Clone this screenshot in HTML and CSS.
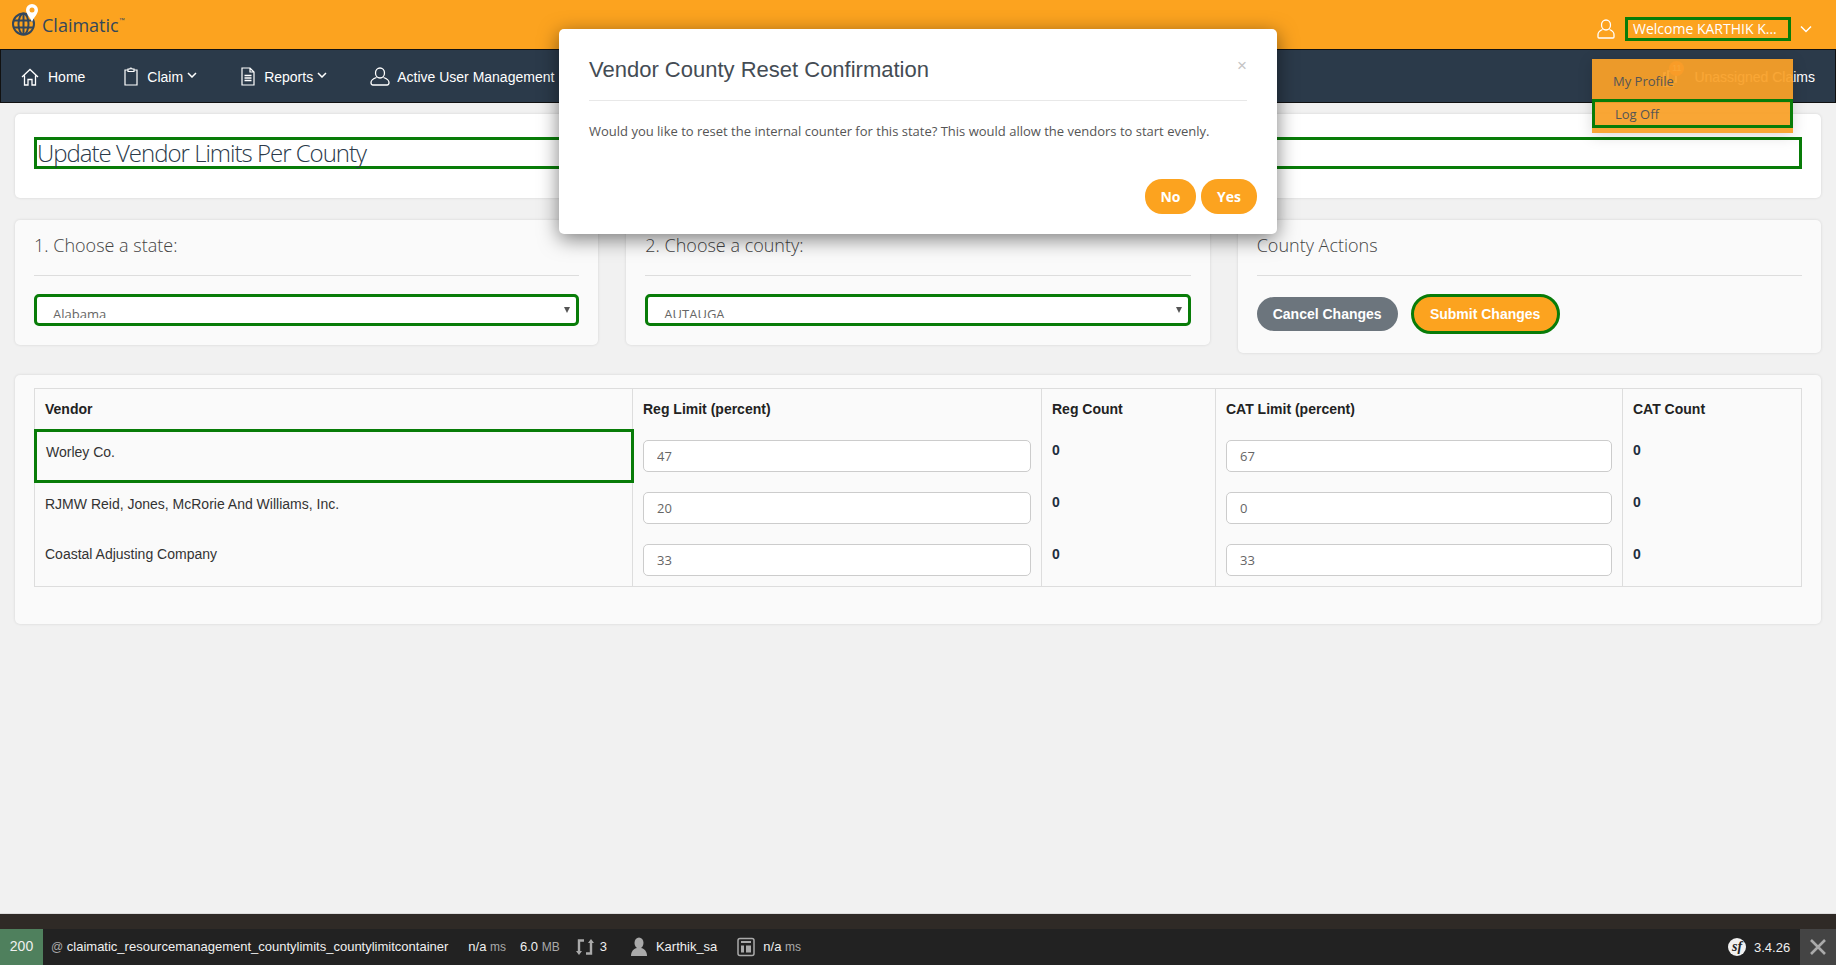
FILE: index.html
```html
<!DOCTYPE html>
<html lang="en">
<head>
  <meta charset="UTF-8" />
  <title>Update Vendor Limits Per County</title>
  <link rel="stylesheet" href="styles.css">
</head>
<body>
  <header class="topbar">
    <div class="logo">
      <svg class="logo-mark" width="32" height="38" viewBox="0 0 32 38">
        <g fill="none" stroke="#33475b" stroke-width="2">
          <circle cx="13.500" cy="24" r="10.500" />
          <ellipse cx="13.500" cy="24" rx="5" ry="10.500" />
          <path d="M13.500 13.500v21M3.500 20.500h20M3.500 27.500h20" />
        </g>
        <path d="M22 4a6 6 0 0 1 6 6c0 4-4 7-6 12c-2-5-6-8-6-12a6 6 0 0 1 6-6z" fill="#fff" />
        <circle cx="22" cy="10" r="2.500" fill="#fca31f" />
      </svg>
      <span class="logo-name">Claimatic</span><span class="logo-tm">™</span>
    </div>
    <div class="account">
      <svg class="account-icon" width="18" height="20" viewBox="0 0 18 20" fill="none" stroke="#fff" stroke-width="1.300">
        <ellipse cx="9" cy="6" rx="4.500" ry="5" />
        <path d="M5.500 10.500C3 11.500 1 13 1 15.500V18a1 1 0 0 0 1 1h14a1 1 0 0 0 1-1v-2.500c0-2.500-2-4-4.500-5" />
      </svg>
      <span class="welcome">Welcome KARTHIK K...</span>
      <svg class="chevron-big" width="12" height="8" viewBox="0 0 12 8" fill="none" stroke="#fff" stroke-width="1.500"><path d="M1 1.500l5 5 5-5" /></svg>
    </div>
  </header>

  <nav class="navbar">
    <a class="nav-item nav-home">
      <svg width="18" height="18" viewBox="0 0 18 18" fill="none" stroke="#fff" stroke-width="1.300">
        <path d="M1 9l8-7.500L17 9M3.500 7.500V17h3.500v-5.500h4V17h3.500V7.500" />
      </svg>
      Home
    </a>
    <a class="nav-item nav-claim">
      <svg width="14" height="19" viewBox="0 0 14 19" fill="none" stroke="#fff" stroke-width="1.200">
        <path d="M4 3H1v15h12V3h-3M4 4.500V2h2a1 1 0 0 1 2 0h2v2.500z" />
      </svg>
      Claim
      <svg class="chevron" width="10" height="6" viewBox="0 0 10 6" fill="none" stroke="#fff" stroke-width="1.500"><path d="M1 1l4 4 4-4" /></svg>
    </a>
    <a class="nav-item nav-reports">
      <svg width="14" height="19" viewBox="0 0 14 19" fill="none" stroke="#fff" stroke-width="1.200">
        <path d="M1 1h8l4 4v13H1zM9 1v4h4" />
        <path d="M3.500 8.500h7M3.500 11h7M3.500 13.500h7" stroke-width="1.600" />
      </svg>
      Reports
      <svg class="chevron" width="10" height="6" viewBox="0 0 10 6" fill="none" stroke="#fff" stroke-width="1.500"><path d="M1 1l4 4 4-4" /></svg>
    </a>
    <a class="nav-item nav-users">
      <svg width="20" height="19" viewBox="0 0 20 19" fill="none" stroke="#fff" stroke-width="1.300">
        <ellipse cx="10" cy="6" rx="4.500" ry="5" />
        <path d="M6.500 10.500C3.500 11.500 1 13 1 15.500c0 1.500.500 2.500 2 2.500h14c1.500 0 2-1 2-2.500c0-2.500-2.500-4-5.500-5" />
      </svg>
      Active User Management
    </a>
    <a class="nav-item nav-unassigned">
      <span class="unassigned-icon">
        <svg width="17" height="20" viewBox="0 0 17 20" fill="none" stroke="#fff" stroke-width="1.700">
          <path d="M5 4h8v11H5zM3 6H1v13h9v-2" />
        </svg>
        <span class="badge">11</span>
      </span>
      Unassigned Claims
    </a>
  </nav>

  <main class="content">
    <section class="card card-title">
      <h1 class="page-title">Update Vendor Limits Per County</h1>
    </section>

    <div class="filters">
      <section class="card filter">
        <h2 class="filter-title">1. Choose a state:</h2>
        <div class="select-box"><span>Alabama</span></div>
      </section>
      <section class="card filter">
        <h2 class="filter-title">2. Choose a county:</h2>
        <div class="select-box"><span>AUTAUGA</span></div>
      </section>
      <section class="card filter">
        <h2 class="filter-title">County Actions</h2>
        <div class="actions">
          <button class="btn btn-grey">Cancel Changes</button>
          <button class="btn btn-orange">Submit Changes</button>
        </div>
      </section>
    </div>

    <section class="card card-table">
      <table class="limits">
        <colgroup>
          <col class="col-vendor"><col class="col-reg"><col class="col-regcount"><col class="col-cat"><col>
        </colgroup>
        <thead>
          <tr><th>Vendor</th><th>Reg Limit (percent)</th><th>Reg Count</th><th>CAT Limit (percent)</th><th>CAT Count</th></tr>
        </thead>
        <tbody>
          <tr>
            <td class="vendor vendor-marked">Worley Co.</td>
            <td><input class="limit" value="47"></td>
            <td class="count">0</td>
            <td><input class="limit" value="67"></td>
            <td class="count">0</td>
          </tr>
          <tr>
            <td class="vendor">RJMW Reid, Jones, McRorie And Williams, Inc.</td>
            <td><input class="limit" value="20"></td>
            <td class="count">0</td>
            <td><input class="limit" value="0"></td>
            <td class="count">0</td>
          </tr>
          <tr>
            <td class="vendor">Coastal Adjusting Company</td>
            <td><input class="limit" value="33"></td>
            <td class="count">0</td>
            <td><input class="limit" value="33"></td>
            <td class="count">0</td>
          </tr>
        </tbody>
      </table>
    </section>
  </main>

  <div class="gap-strip"></div>
  <footer class="toolbar">
    <span class="status">200</span>
    <span class="route"><i>@</i> claimatic_resourcemanagement_countylimits_countylimitcontainer</span>
    <span class="metric metric-time">n/a <i>ms</i></span>
    <span class="metric metric-mem">6.0 <i>MB</i></span>
    <svg class="tool-icon" width="18" height="20" viewBox="0 0 18 20" fill="none" stroke="#aaa" stroke-width="2.400">
      <path d="M8 3.500H3v12M10 16.500h5v-12" />
      <path d="M0 14l3 4 3-4zM12 6l3-4 3 4z" fill="#aaa" stroke="none" />
    </svg>
    <span class="metric metric-count">3</span>
    <svg class="tool-icon tool-user" width="18" height="20" viewBox="0 0 18 20" fill="#aaa">
      <ellipse cx="9" cy="6" rx="4.500" ry="5.500" />
      <path d="M1 19c0-5 3-7.500 6-8h4c3 .500 6 3 6 8z" />
    </svg>
    <span class="metric metric-user">Karthik_sa</span>
    <svg class="tool-icon tool-layout" width="18" height="20" viewBox="0 0 18 20" fill="none" stroke="#aaa" stroke-width="1.500">
      <rect x="1" y="1.500" width="16" height="17" rx="2" />
      <path d="M4 5h10" stroke-width="2" />
      <path d="M4 8.500h3v7H4zM9 8.500h5v7H9z" fill="#aaa" stroke="none" />
    </svg>
    <span class="metric metric-layout">n/a <i>ms</i></span>
    <span class="toolbar-right">
      <span class="sf-logo">sf</span>
      <span class="version">3.4.26</span>
      <span class="toolbar-close">
        <svg width="16" height="16" viewBox="0 0 16 16" stroke="#aaa" stroke-width="2.600"><path d="M1 1l14 14M15 1L1 15" /></svg>
      </span>
    </span>
  </footer>

  <div class="user-menu">
    <a class="user-menu-item">My Profile</a>
    <a class="user-menu-item user-menu-logoff">Log Off</a>
  </div>

  <div class="modal">
    <div class="modal-head">
      <h3 class="modal-title">Vendor County Reset Confirmation</h3>
      <span class="modal-close">×</span>
    </div>
    <p class="modal-body">Would you like to reset the internal counter for this state? This would allow the vendors to start evenly.</p>
    <div class="modal-foot">
      <button class="btn-small">No</button>
      <button class="btn-small">Yes</button>
    </div>
  </div>
</body>
</html>
```

FILE: styles.css
```css
* {
  box-sizing: border-box;
}

body {
  margin: 0;
  height: 965px;
  overflow: hidden;
  display: flex;
  flex-direction: column;
  font-family: "Liberation Sans", Arial, sans-serif;
  background-color: #f1f1f1;
  color: #333;
}

/* top orange bar */
.topbar {
  height: 49px;
  flex: none;
  background-color: #fca31f;
  display: flex;
  justify-content: space-between;
  align-items: center;
  padding: 0 24px 0 10px;
}

.logo {
  display: flex;
  align-items: center;
  height: 49px;
}

.logo-mark {
  margin-top: -11px;
}

.logo-name {
  font-family: "Open Sans", sans-serif;
  font-size: 18px;
  color: #33475b;
  margin-top: 1px;
}

.logo-tm {
  font-size: 6px;
  color: #33475b;
  margin-top: -10px;
}

.account {
  display: flex;
  align-items: center;
  padding-top: 9px;
}

.account-icon {
  margin-right: 10px;
}

.welcome {
  width: 166px;
  height: 24px;
  border: 3px solid #087c08;
  color: #fff;
  font-family: "Open Sans", sans-serif;
  font-size: 14px;
  line-height: 18px;
  padding-left: 5px;
  white-space: nowrap;
}

.chevron-big {
  margin-left: 9px;
}

/* dark nav */
.navbar {
  height: 54px;
  flex: none;
  background-color: #2b3a4a;
  border: 1px solid #111;
  display: flex;
  align-items: center;
  color: #fff;
  font-size: 14px;
  padding: 1px 0 0 20px;
}

.nav-item {
  display: flex;
  align-items: center;
  white-space: nowrap;
}

.nav-item svg {
  margin-right: 9px;
}

.nav-item .chevron {
  margin: -4px 0 0 4px;
}

.nav-claim {
  margin-left: 39px;
}

.nav-reports {
  margin-left: 44px;
}

.nav-users {
  margin-left: 43px;
}

.nav-users svg {
  margin-right: 7px;
}

.nav-unassigned {
  margin-left: auto;
  margin-right: 20px;
}

.unassigned-icon {
  position: relative;
  display: flex;
  margin-right: 5px;
}

.badge {
  position: absolute;
  top: -6px;
  left: 6px;
  width: 15px;
  height: 15px;
  border-radius: 50%;
  background-color: #f05a22;
  color: #fff;
  font-size: 9px;
  line-height: 15px;
  text-align: center;
}

/* cards */
.content {
  flex: 1;
  padding: 11px 15px 0;
}

.card {
  background-color: #fafafa;
  border-radius: 5px;
  box-shadow: 0 0 3px rgba(0, 0, 0, 0.12);
}

.card-title {
  height: 84px;
  padding: 23px 19px 0;
  background-color: #fff;
}

.page-title {
  margin: 0;
  height: 32px;
  border: 3px solid #087c08;
  font-family: "Open Sans", sans-serif;
  font-weight: 300;
  font-size: 24px;
  letter-spacing: -1px;
  line-height: 25px;
  color: #2b3a4a;
}

.filters {
  display: grid;
  grid-template-columns: repeat(3, 1fr);
  gap: 28px;
  align-items: start;
  margin-top: 22px;
}

.filter {
  padding: 0 19px 19px;
}

.filter-title {
  margin: 0 0 18px;
  height: 56px;
  border-bottom: 1px solid #ddd;
  font-family: "Open Sans", sans-serif;
  font-weight: 300;
  font-size: 18px;
  line-height: 50px;
  color: #444;
}

.select-box {
  position: relative;
  height: 32px;
  border: 3px solid #087c08;
  border-radius: 5px;
  background-color: #fff;
  font-family: "Open Sans", sans-serif;
  font-size: 13px;
  color: #666;
  padding: 8px 0 0 16px;
  line-height: 18px;
}

.select-box span {
  display: block;
  height: 13px;
  overflow: hidden;
}

.select-box::after {
  content: "";
  position: absolute;
  right: 6px;
  top: 10px;
  border-left: 3px solid transparent;
  border-right: 3px solid transparent;
  border-top: 6px solid #555;
}

.actions {
  display: flex;
  align-items: center;
  gap: 13px;
  height: 40px;
}

.btn {
  border-radius: 17px;
  border: 0;
  color: #fff;
  font-family: "Liberation Sans", Arial, sans-serif;
  font-weight: bold;
  font-size: 14px;
  padding: 0;
}

.btn-grey {
  width: 141px;
  height: 34px;
  background-color: #6c757d;
}

.btn-orange {
  width: 149px;
  height: 40px;
  border-radius: 20px;
  background-color: #fca31f;
  border: 3px solid #087c08;
}

.card-table {
  margin-top: 22px;
  height: 249px;
  padding: 13px 19px 0;
}

.limits {
  width: 100%;
  table-layout: fixed;
  border-collapse: collapse;
  border: 1px solid #ddd;
  font-size: 14px;
  color: #333;
}

.col-vendor {
  width: 598px;
}

.col-reg {
  width: 409px;
}

.col-regcount {
  width: 174px;
}

.col-cat {
  width: 407px;
}

.limits th {
  height: 41px;
  text-align: left;
  padding: 0 10px;
  border-left: 1px solid #ddd;
  color: #222;
  font-size: 14px;
}

.limits td {
  height: 52px;
  padding: 10px;
  vertical-align: top;
  border-left: 1px solid #ddd;
}

.limits td.vendor {
  padding-top: 14px;
  line-height: 16px;
}

.limits tr:last-child td.vendor {
  padding-top: 12px;
}

.limits td.count {
  font-weight: bold;
  font-size: 14px;
  color: #1d2f3f;
  padding-top: 12px;
  line-height: 16px;
}

.limits td.vendor-marked {
  outline: 3px solid #087c08;
  outline-offset: -2px;
  padding-left: 11px;
}

.limit {
  display: block;
  width: 100%;
  height: 32px;
  background-color: #fff;
  border: 1px solid #ccc;
  border-radius: 5px;
  padding: 0 13px;
  font-family: "Open Sans", sans-serif;
  font-size: 13px;
  color: #666;
}

/* symfony toolbar */
.gap-strip {
  height: 16px;
  flex: none;
  background-color: #2f2a26;
  border-top: 1px solid #ddd;
}

.toolbar {
  height: 36px;
  flex: none;
  background-color: #222;
  display: flex;
  align-items: center;
  color: #f0f0f0;
  font-size: 13px;
  white-space: nowrap;
}

.toolbar i {
  font-style: normal;
  color: #aaa;
  font-size: 12px;
}

.status {
  width: 43px;
  height: 36px;
  line-height: 34px;
  text-align: center;
  background-color: #4f805d;
  font-size: 14px;
}

.route,
.metric {
  position: relative;
  top: -1px;
}

.route {
  margin-left: 8px;
}

.metric-time {
  margin-left: 20px;
}

.metric-mem {
  margin-left: 14px;
}

.tool-icon {
  margin-left: 16px;
}

.metric-count {
  margin-left: 6px;
}

.tool-user {
  margin-left: 23px;
}

.metric-user {
  margin-left: 8px;
}

.tool-layout {
  margin-left: 20px;
}

.metric-layout {
  margin-left: 8px;
}

.toolbar-right {
  margin-left: auto;
  display: flex;
  align-items: center;
  height: 36px;
}

.sf-logo {
  width: 18px;
  height: 18px;
  border-radius: 50%;
  background-color: #f0f0f0;
  color: #222;
  font-family: "Liberation Serif", serif;
  font-style: italic;
  font-weight: bold;
  font-size: 14px;
  line-height: 17px;
  text-align: center;
}

.version {
  margin-left: 8px;
  width: 46px;
  font-size: 13px;
}

.toolbar-close {
  width: 36px;
  height: 36px;
  background-color: #444;
  display: flex;
  align-items: center;
  justify-content: center;
}

/* overlays */
.user-menu {
  position: absolute;
  left: 1592px;
  top: 59px;
  width: 201px;
  height: 74px;
  background-color: rgba(249, 160, 40, 0.94);
  box-shadow: 0 3px 14px rgba(0, 0, 0, 0.15);
  font-family: "Open Sans", sans-serif;
  font-size: 13px;
  color: #555;
}

.user-menu-item {
  display: block;
  height: 29px;
  line-height: 23px;
  padding-left: 21px;
}

.user-menu-item:first-child {
  height: 40px;
  line-height: 44px;
}

.user-menu-logoff {
  border: 3px solid #087c08;
  padding-left: 20px;
  line-height: 24px;
}

.modal {
  position: absolute;
  left: 559px;
  top: 29px;
  width: 718px;
  height: 205px;
  background-color: #fff;
  border-radius: 5px;
  box-shadow: 0 5px 20px rgba(0, 0, 0, 0.5);
  padding: 0 20px 0 30px;
}

.modal-head {
  height: 72px;
  margin-right: 10px;
  padding-top: 11px;
  border-bottom: 1px solid #e8e8e8;
  display: flex;
  justify-content: space-between;
  align-items: center;
}

.modal-title {
  margin: 0;
  font-weight: normal;
  font-size: 22px;
  color: #444c54;
}

.modal-close {
  color: #c4c4c4;
  font-size: 17px;
  margin: -8px 0 0 0;
}

.modal-body {
  margin: 21px 0 0;
  font-family: "Open Sans", sans-serif;
  font-size: 13px;
  line-height: 18px;
  color: #555;
}

.modal-foot {
  display: flex;
  justify-content: flex-end;
  gap: 5px;
  margin-top: 39px;
}

.btn-small {
  height: 35px;
  border-radius: 17px;
  border: 0;
  background-color: #fca31f;
  color: #fff;
  font-family: "Open Sans", sans-serif;
  font-weight: bold;
  font-size: 14px;
  padding: 0;
  width: 51px;
}

.btn-small:last-child {
  width: 56px;
}
```
